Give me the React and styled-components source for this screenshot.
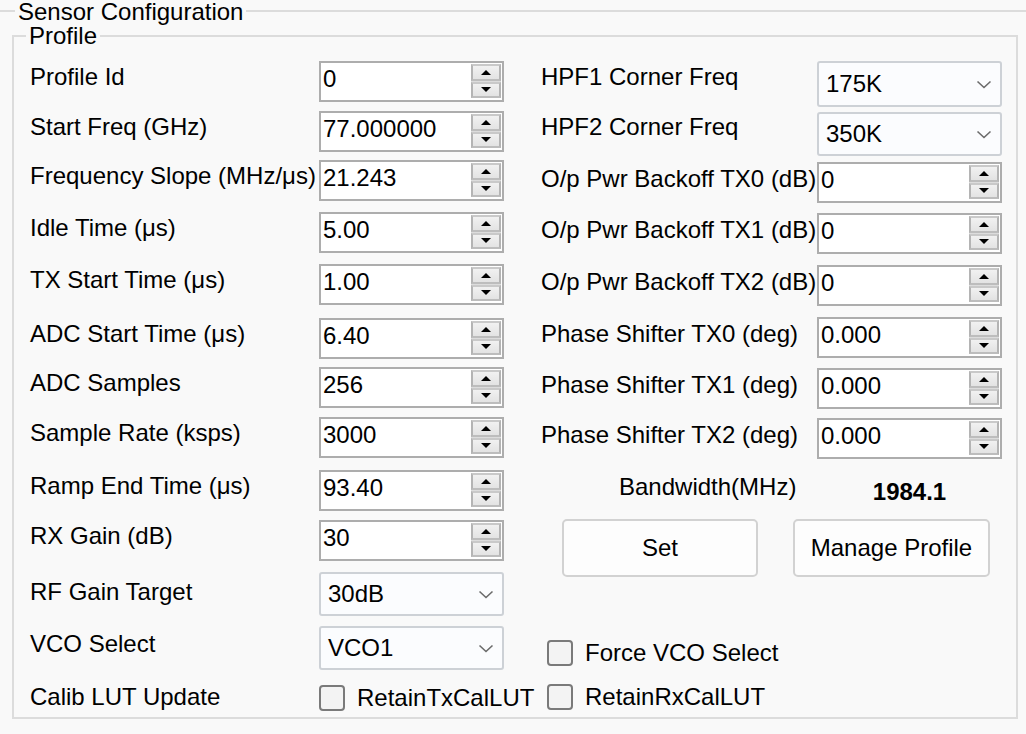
import React from 'react'
import styled, { createGlobalStyle } from 'styled-components'

const GlobalStyle = createGlobalStyle`
  html, body {
    margin: 0;
    background: #f9f9f9;
    overflow: hidden;
  }
  body {
    font-family: "Liberation Sans", Arial, sans-serif;
    color: #000;
  }
`

const Outer = styled.fieldset`
  margin: 0 -20px 0 -4px;
  padding: 0 0 40px 0;
  border: 2px solid #dcdcdc;
  min-width: 0;
`

const Legend = styled.legend`
  font-size: 24px;
  line-height: 20px;
  padding: ${p => p.$top || 0}px 3px 0;
  margin-left: ${p => p.$indent}px;
`

const Inner = styled.fieldset`
  box-sizing: border-box;
  width: 1006px;
  margin: 4px 0 0 14px;
  padding: 15px 16px 9px;
  border: 2px solid #dcdcdc;
  min-width: 0;
`

const Columns = styled.div`
  display: flex;
  align-items: flex-start;
  gap: 37px;
`

const Column = styled.div`
  display: flex;
  flex-direction: column;
`

const Row = styled.div`
  display: grid;
  grid-template-columns: ${p => p.$label}px 185px;
  align-items: center;
  height: ${p => p.$h}px;
  margin-top: ${p => p.$gap || 0}px;
`

const Label = styled.span`
  font-size: 24px;
  white-space: nowrap;
  padding-bottom: ${p => p.$lift || 0}px;
`

const SpinFrame = styled.div`
  box-sizing: border-box;
  display: flex;
  height: 100%;
  border: 2px solid #adadad;
  background: #fff;
`

const SpinInput = styled.input`
  flex: 1;
  min-width: 0;
  border: none;
  outline: none;
  background: transparent;
  font: 24px "Liberation Sans", Arial, sans-serif;
  color: #000;
  padding: 0 0 5px 2px;
`

const SpinButtons = styled.div`
  width: 30px;
  margin: 1px 1px 2px 0;
  display: flex;
  flex-direction: column;
  gap: 1px;
  background: #dcdcdc;
`

const SpinButton = styled.div`
  flex: 1;
  display: flex;
  align-items: center;
  justify-content: center;
  background: linear-gradient(#f1f1f1, #e3e3e3);
  border: 2px solid #b4b4b4;
  border-top-color: #c9c9c9;
  border-bottom-color: #bdbdbd;

  &::after {
    content: '';
    border-left: 5px solid transparent;
    border-right: 5px solid transparent;
    ${p => (p.$down ? 'border-top: 5px solid #000;' : 'border-bottom: 5px solid #000;')}
  }
`

const ComboFrame = styled.div`
  box-sizing: border-box;
  height: 100%;
  display: flex;
  align-items: center;
  justify-content: space-between;
  border: 2px solid #cdd1d6;
  border-radius: 3px;
  background: #fbfcfe;
  padding: 0 8px 0 7px;
  font-size: 24px;
`

const CheckRow = styled.label`
  display: flex;
  align-items: center;
  gap: 12px;
  font-size: 24px;
  white-space: nowrap;
  margin-left: ${p => p.$indent || 0}px;
`

const Box = styled.span`
  box-sizing: border-box;
  flex-shrink: 0;
  width: 26px;
  height: 26px;
  border: 2px solid #7a7a7a;
  border-radius: 4px;
  background: #f3f3f3;
`

const Pair = styled.div`
  display: flex;
  align-items: flex-start;
  height: ${p => p.$h}px;
  margin-top: ${p => p.$gap}px;
`

const Bandwidth = styled.span`
  font-size: 24px;
  line-height: 28px;
  margin-left: 78px;
  width: 198px;
`

const BandValue = styled.span`
  width: 185px;
  text-align: center;
  font-size: 24px;
  font-weight: bold;
  line-height: 28px;
  padding-top: 5px;
`

const Buttons = styled.div`
  display: flex;
  gap: 35px;
  margin: 13px 0 0 21px;
`

const Button = styled.button`
  box-sizing: border-box;
  width: ${p => p.$w}px;
  height: 58px;
  border: 2px solid #d2d2d2;
  border-radius: 5px;
  background: #fdfdfd;
  font: 24px "Liberation Sans", Arial, sans-serif;
  color: #000;
  padding: 0;
`

function Spin({ value }) {
  return (
    <SpinFrame>
      <SpinInput defaultValue={value} />
      <SpinButtons>
        <SpinButton />
        <SpinButton $down />
      </SpinButtons>
    </SpinFrame>
  )
}

function Combo({ value }) {
  return (
    <ComboFrame>
      <span>{value}</span>
      <svg width="16" height="9" viewBox="0 0 16 9">
        <path d="M1.5 1.5 L8 7.5 L14.5 1.5" fill="none" stroke="#6b6b6b" strokeWidth="1.6" />
      </svg>
    </ComboFrame>
  )
}

function Check({ children, indent }) {
  return (
    <CheckRow $indent={indent}>
      <Box />
      {children}
    </CheckRow>
  )
}

const leftRows = [
  { label: 'Profile Id', value: '0', gap: 0 },
  { label: 'Start Freq (GHz)', value: '77.000000', gap: 9 },
  { label: 'Frequency Slope (MHz/μs)', value: '21.243', gap: 8 },
  { label: 'Idle Time (μs)', value: '5.00', gap: 11 },
  { label: 'TX Start Time (μs)', value: '1.00', gap: 11 },
  { label: 'ADC Start Time (μs)', value: '6.40', gap: 13 },
  { label: 'ADC Samples', value: '256', gap: 8 },
  { label: 'Sample Rate (ksps)', value: '3000', gap: 9 },
  { label: 'Ramp End Time (μs)', value: '93.40', gap: 12 },
  { label: 'RX Gain (dB)', value: '30', gap: 9 },
  { label: 'RF Gain Target', value: '30dB', gap: 11, combo: true, h: 44, lift: 4 },
  { label: 'VCO Select', value: 'VCO1', gap: 10, combo: true, h: 44, lift: 8 },
]

const rightRows = [
  { label: 'HPF1 Corner Freq', value: '175K', gap: 0, combo: true, h: 46, lift: 14 },
  { label: 'HPF2 Corner Freq', value: '350K', gap: 5, combo: true, h: 44, lift: 14 },
  { label: 'O/p Pwr Backoff TX0 (dB)', value: '0', gap: 6, lift: 7 },
  { label: 'O/p Pwr Backoff TX1 (dB)', value: '0', gap: 10, lift: 7 },
  { label: 'O/p Pwr Backoff TX2 (dB)', value: '0', gap: 11, lift: 7 },
  { label: 'Phase Shifter TX0 (deg)', value: '0.000', gap: 11, lift: 7 },
  { label: 'Phase Shifter TX1 (deg)', value: '0.000', gap: 10, lift: 7 },
  { label: 'Phase Shifter TX2 (deg)', value: '0.000', gap: 9, lift: 7 },
]

function FieldRow({ row, labelWidth }) {
  return (
    <Row $label={labelWidth} $h={row.h || 41} $gap={row.gap}>
      <Label $lift={row.lift ?? 9}>{row.label}</Label>
      {row.combo ? <Combo value={row.value} /> : <Spin value={row.value} />}
    </Row>
  )
}

export default function App() {
  return (
    <>
      <GlobalStyle />
      <Outer>
        <Legend $indent={17} $top={2}>Sensor Configuration</Legend>
        <Inner>
          <Legend $indent={-4}>Profile</Legend>
          <Columns>
            <Column>
              {leftRows.map(r => (
                <FieldRow key={r.label} row={r} labelWidth={289} />
              ))}
              <Row $label={289} $h={25} $gap={13}>
                <Label $lift={2}>Calib LUT Update</Label>
                <Check>RetainTxCalLUT</Check>
              </Row>
            </Column>
            <Column>
              {rightRows.map(r => (
                <FieldRow key={r.label} row={r} labelWidth={276} />
              ))}
              <Pair $h={33} $gap={14}>
                <Bandwidth>Bandwidth(MHz)</Bandwidth>
                <BandValue>1984.1</BandValue>
              </Pair>
              <Buttons>
                <Button $w={196}>Set</Button>
                <Button $w={197}>Manage Profile</Button>
              </Buttons>
              <Pair $h={25} $gap={62}>
                <Check indent={6}>Force VCO Select</Check>
              </Pair>
              <Pair $h={25} $gap={19}>
                <Check indent={6}>RetainRxCalLUT</Check>
              </Pair>
            </Column>
          </Columns>
        </Inner>
      </Outer>
    </>
  )
}
